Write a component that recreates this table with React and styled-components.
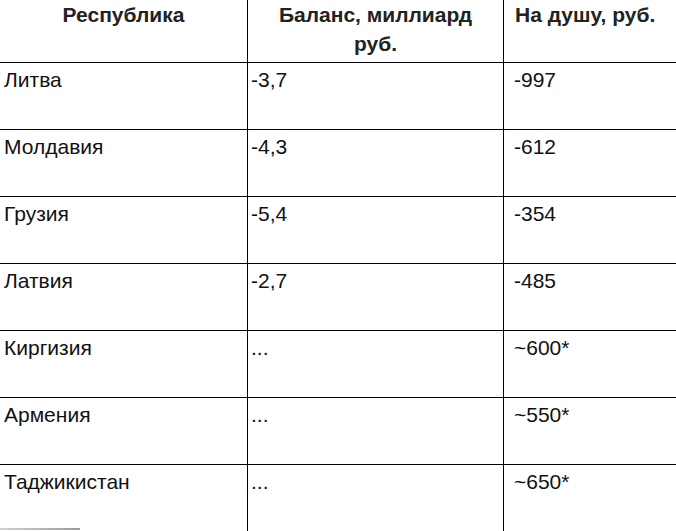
import React from "react";
import styled, { createGlobalStyle } from "styled-components";

const Global = createGlobalStyle`
  html, body { margin: 0; padding: 0; background: #fff; overflow: hidden; }
  body { font-family: "Liberation Sans", Arial, sans-serif; }
`;

const Page = styled.div`
  width: 676px;
  height: 531px;
  overflow: hidden;
  position: relative;
`;

const Grid = styled.div`
  display: grid;
  grid-template-columns: 248px 256px 1fr;
  grid-auto-rows: 67px;
  grid-template-rows: 63px;
  width: 700px;
`;

const Cell = styled.div`
  box-sizing: border-box;
  border-bottom: ${(p) => (p.$last ? "none" : "1px solid #000")};
  border-right: ${(p) => (p.$col < 2 ? "1px solid #000" : "none")};
  padding: 5px 0 0 ${(p) => (p.$col === 2 ? 10 : p.$col === 1 ? 3 : 4)}px;
  font-size: 21px;
  line-height: 23px;
  color: #111;
`;

const Head = styled(Cell)`
  font-weight: bold;
  font-size: 21px;
  color: #222;
  line-height: 29px;
  padding: 0 ${(p) => (p.$col === 2 ? 0 : 8)}px 0 ${(p) => (p.$col === 2 ? 11 : 8)}px;
  text-align: ${(p) => (p.$col === 2 ? "left" : "center")};
`;

const ScrollThumb = styled.div`
  position: absolute;
  left: 0;
  bottom: 1px;
  width: 80px;
  height: 2px;
  background: linear-gradient(to right, #d0d0d8, #9a9aa6);
`;

const rows = [
  ["Литва", "-3,7", "-997"],
  ["Молдавия", "-4,3", "-612"],
  ["Грузия", "-5,4", "-354"],
  ["Латвия", "-2,7", "-485"],
  ["Киргизия", "...", "~600*"],
  ["Армения", "...", "~550*"],
  ["Таджикистан", "...", "~650*"],
];

export default function App() {
  return (
    <Page>
      <Global />
      <Grid>
        <Head $col={0}>Республика</Head>
        <Head $col={1}>Баланс, миллиард руб.</Head>
        <Head $col={2}>На душу, руб.</Head>
        {rows.map((r, i) =>
          r.map((v, c) => (
            <Cell key={i + "-" + c} $col={c} $last={i === rows.length - 1}>
              {v}
            </Cell>
          ))
        )}
      </Grid>
      <ScrollThumb />
    </Page>
  );
}
